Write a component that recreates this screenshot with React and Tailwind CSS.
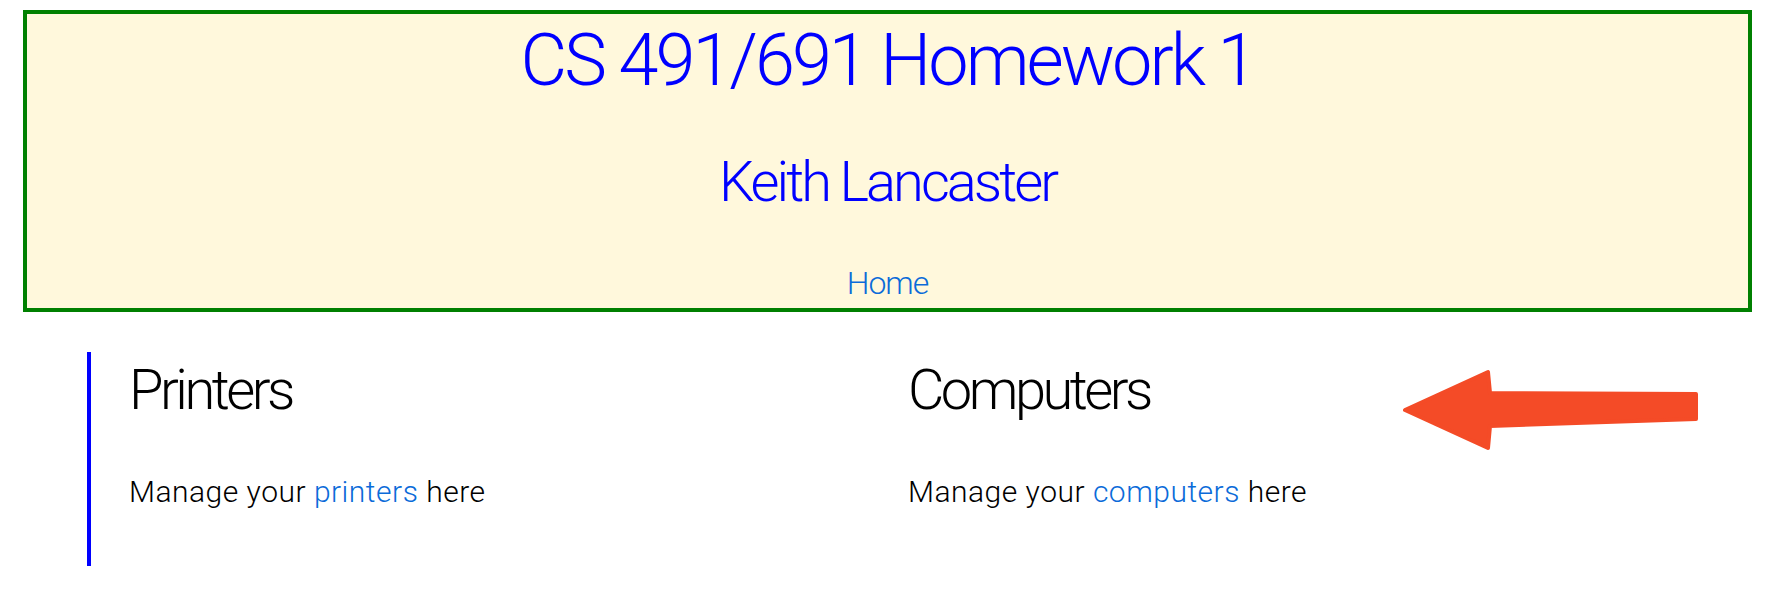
import React from "react";

const font = { fontFamily: "Roboto, 'Liberation Sans', sans-serif" };

const Arrow = () => (
  <svg
    className="absolute left-[1400px] top-[368px]"
    width="300"
    height="84"
    viewBox="0 0 300 84"
  >
    <polygon
      points="5,42 88,4 90,25 296,26 296,51 90,58 88,80"
      fill="#f44b27"
      stroke="#f44b27"
      strokeWidth="4"
      strokeLinejoin="round"
    />
  </svg>
);

const Section = ({ title, link, bordered }) => (
  <div
    className={
      bordered
        ? "w-[821px] border-l-4 border-[#0000ff] pl-[38px] pt-[10px] pb-[59px]"
        : "pt-[10px] pb-[59px]"
    }
  >
    <h2 className="text-[56px] leading-[56px] font-light text-black tracking-[-3.5px]">
      {title}
    </h2>
    <p className="mt-[59px] text-[30px] leading-[30px] font-light text-black tracking-[0.5px]">
      Manage your{" "}
      <a href="#" className="text-[#0b6bd9]">
        {link}
      </a>{" "}
      here
    </p>
  </div>
);

export default function App() {
  return (
    <div className="relative w-[1768px] h-[606px] bg-white overflow-hidden" style={font}>
      {/* header */}
      <header className="mt-[10px] ml-[23px] w-[1729px] border-4 border-[#008000] bg-[#fff8dc] pt-[11px] pb-[9px] flex flex-col items-center">
        <h1 className="text-[72px] leading-[72px] font-light text-[#0000ff] tracking-[-3px]">
          CS 491/691 Homework 1
        </h1>
        <h2 className="mt-[57px] text-[56px] leading-[56px] font-light text-[#0000ff] tracking-[-3px]">
          Keith Lancaster
        </h2>
        <a href="#" className="mt-[57px] text-[32px] leading-[32px] font-light text-[#0b6bd9] tracking-[-1px]">
          Home
        </a>
      </header>

      {/* sections */}
      <div className="mt-[40px] ml-[87px] flex">
        <Section title="Printers" link="printers" bordered />
        <Section title="Computers" link="computers" />
      </div>

      <Arrow />
    </div>
  );
}
